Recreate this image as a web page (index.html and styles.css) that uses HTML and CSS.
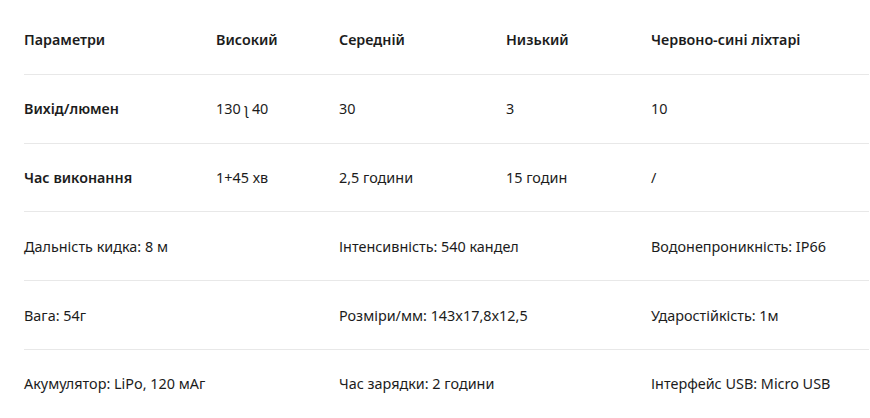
FILE: index.html
```html
<!DOCTYPE html>
<html lang="uk">
<head>
<meta charset="utf-8">
<link rel="stylesheet" href="styles.css">
</head>
<body>
<div class="specs">
  <div class="row head">
    <div class="cell">Параметри</div>
    <div class="cell">Високий</div>
    <div class="cell">Середній</div>
    <div class="cell">Низький</div>
    <div class="cell">Червоно-сині ліхтарі</div>
  </div>
  <div class="row">
    <div class="cell strong">Вихід/люмен</div>
    <div class="cell">130 ʅ 40</div>
    <div class="cell">30</div>
    <div class="cell">3</div>
    <div class="cell">10</div>
  </div>
  <div class="row">
    <div class="cell strong">Час виконання</div>
    <div class="cell">1+45 хв</div>
    <div class="cell">2,5 години</div>
    <div class="cell">15 годин</div>
    <div class="cell">/</div>
  </div>
  <div class="row">
    <div class="cell wide">Дальність кидка: 8 м</div>
    <div class="cell wide">Інтенсивність: 540 кандел</div>
    <div class="cell">Водонепроникність: IP66</div>
  </div>
  <div class="row">
    <div class="cell wide">Вага: 54г</div>
    <div class="cell wide">Розміри/мм: 143x17,8x12,5</div>
    <div class="cell">Ударостійкість: 1м</div>
  </div>
  <div class="row last">
    <div class="cell wide">Акумулятор: LiPo, 120 мАг</div>
    <div class="cell wide">Час зарядки: 2 години</div>
    <div class="cell">Інтерфейс USB: Micro USB</div>
  </div>
</div>
</body>
</html>
```

FILE: styles.css
```css
html, body {
  margin: 0;
  padding: 0;
  background: #ffffff;
}
body {
  font-family: "Noto Sans", "DejaVu Sans", sans-serif;
  font-size: 14.4px;
  color: #1c1c1c;
}
.specs {
  padding: 6px 1px 0 24px;
}
.row {
  display: grid;
  grid-template-columns: 192px 123px 167px 145px 1fr;
  align-items: center;
  height: 67.8px;
  border-bottom: 1px solid #e8e8e8;
}
.row.last {
  border-bottom: none;
}
.cell.wide {
  grid-column: span 2;
}
.head .cell,
.cell.strong {
  font-weight: 600;
  font-size: 14.3px;
}
```
